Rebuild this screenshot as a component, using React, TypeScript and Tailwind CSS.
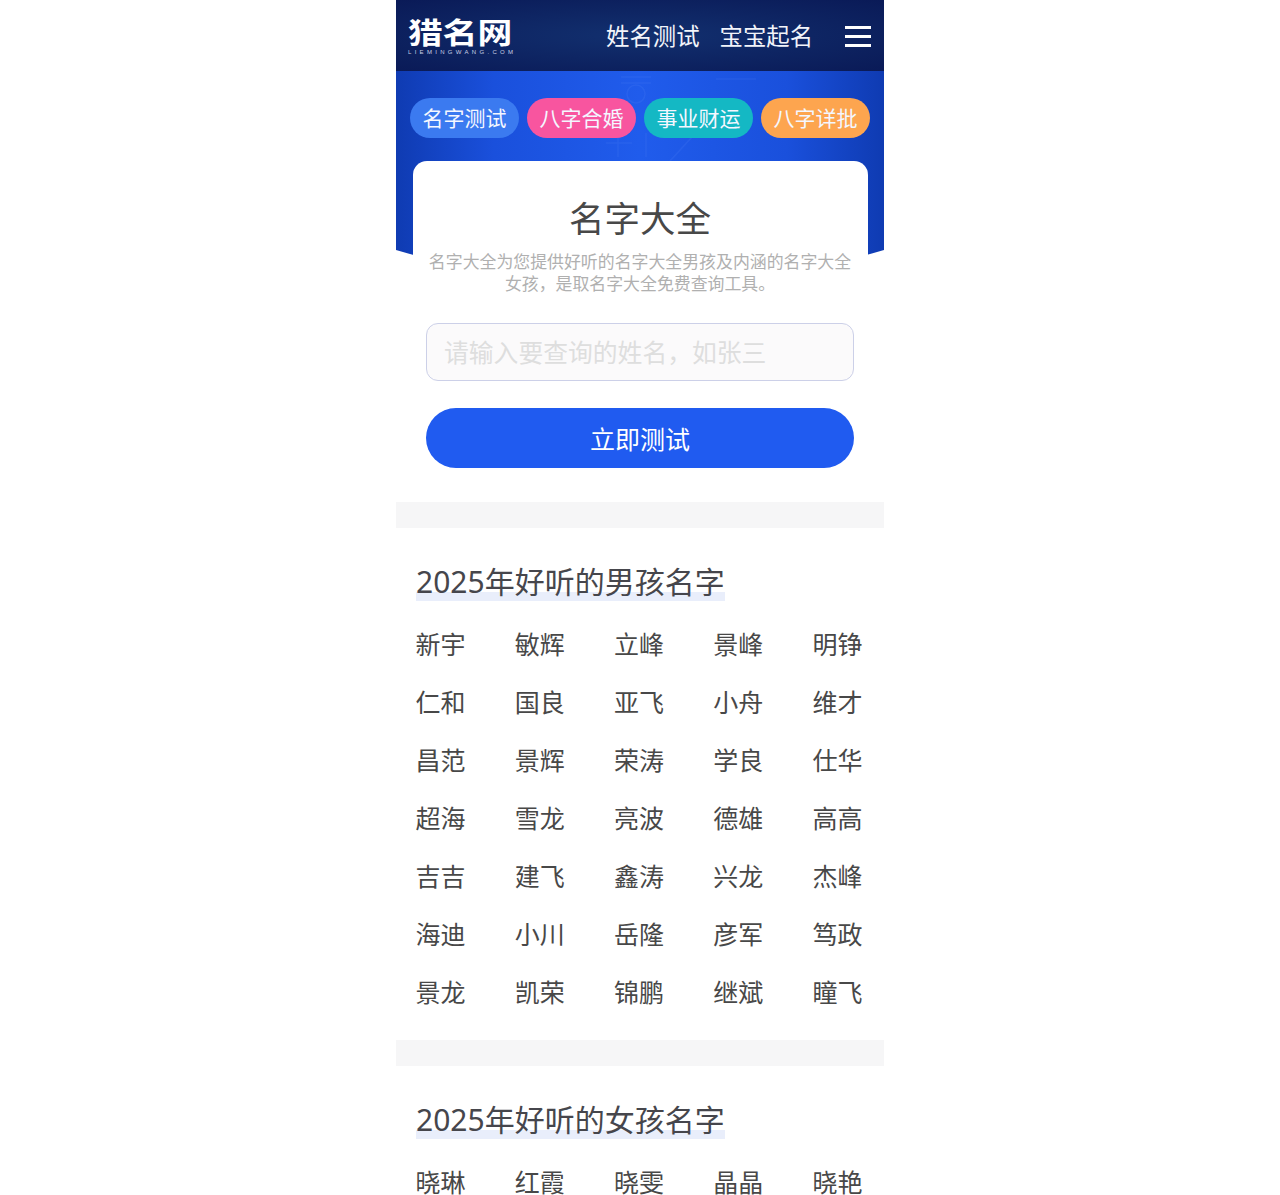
const boys = [
  ["新宇", "敏辉", "立峰", "景峰", "明铮"],
  ["仁和", "国良", "亚飞", "小舟", "维才"],
  ["昌范", "景辉", "荣涛", "学良", "仕华"],
  ["超海", "雪龙", "亮波", "德雄", "高高"],
  ["吉吉", "建飞", "鑫涛", "兴龙", "杰峰"],
  ["海迪", "小川", "岳隆", "彦军", "笃政"],
  ["景龙", "凯荣", "锦鹏", "继斌", "瞳飞"],
]

const girls = [["晓琳", "红霞", "晓雯", "晶晶", "晓艳"]]

function NameSection({ title, rows }: { title: string; rows: string[][] }) {
  return (
    <section className="px-5 pt-8 pb-[19px]">
      <h2 className="h-[41px] text-[30px] leading-[44px] font-normal text-[#46464c]">
        <span className="inline-block h-[41px] bg-[linear-gradient(to_top,#e9eefb_9px,transparent_9px)]">{title}</span>
      </h2>
      <div className="mt-[14px]">
        {rows.map((row, i) => (
          <div key={i} className="grid grid-cols-[99.25px_99.25px_99.25px_99.25px_50px]">
            {row.map((name) => (
              <span key={name} className="-ml-[0.5px] h-[58px] text-[25px] leading-[58px] text-[#484848]">
                {name}
              </span>
            ))}
          </div>
        ))}
      </div>
    </section>
  )
}

export default function App() {
  return (
    <div className="h-[1195px] overflow-hidden bg-white font-['Noto_Sans','Noto_Sans_CJK_SC',sans-serif]">
      <div className="mx-auto w-[488px]">
        <header className="flex h-[71px] items-center bg-[radial-gradient(ellipse_at_center,#12306f_0%,#0a1a57_100%)] pl-3 pr-[13px] text-white">
          <div className="w-[110px] pt-[3px]">
            <div className="origin-left scale-x-[1.2] text-[29px] leading-[28px] font-bold">猎名网</div>
            <div className="mt-[2px] text-[6px] leading-[6px] tracking-[3.3px] text-[#c8d0e4] font-['Liberation_Sans',sans-serif]">LIEMINGWANG.COM</div>
          </div>
          <nav className="ml-[88px] flex gap-[20px] text-[23.4px] leading-[34px] text-[#f2f4fa]">
            <span>姓名测试</span>
            <span>宝宝起名</span>
          </nav>
          <div className="ml-auto flex h-[22px] w-[26px] flex-col justify-between pt-px">
            <i className="block h-[3px] bg-white" />
            <i className="block h-[3px] bg-white" />
            <i className="block h-[3px] bg-white" />
          </div>
        </header>

        <div className="relative">
          <svg className="absolute left-0 top-0 h-[220px] w-[488px]" viewBox="0 0 488 220">
            <defs>
              <linearGradient id="hero" x1="0" y1="0" x2="1" y2="0">
                <stop offset="0" stopColor="#0f3bb2" />
                <stop offset="0.2" stopColor="#1a50dc" />
                <stop offset="0.5" stopColor="#205cec" />
                <stop offset="0.8" stopColor="#1a50dc" />
                <stop offset="1" stopColor="#0f3bb2" />
              </linearGradient>
            </defs>
            <path d="M0 0H488V179Q244 251 0 179Z" fill="url(#hero)" />
            <g fill="none" stroke="#5f8ff5" strokeOpacity="0.15" strokeWidth="1.5">
              <circle cx="240" cy="23" r="9" />
              <path d="M225 6h30M225 12h30M222 64v22M250 62v24M296 66l-22 24M320 8h40M210 72h26" />
            </g>
          </svg>

          <div className="relative flex gap-2 pl-[14px] pt-[27px] text-[21px] text-[#f4f7ff]">
            <span className="h-10 w-[109px] rounded-full bg-[#3b7af0] text-center leading-10">名字测试</span>
            <span className="h-10 w-[109px] rounded-full bg-[#f8559f] text-center leading-10">八字合婚</span>
            <span className="h-10 w-[109px] rounded-full bg-[#14b8c4] text-center leading-10">事业财运</span>
            <span className="h-10 w-[109px] rounded-full bg-[#fda54f] text-center leading-10">八字详批</span>
          </div>

          <div className="relative ml-[17px] mt-[23px] w-[455px] rounded-t-[14px] bg-white pr-px pt-8 text-center">
            <h1 className="text-[35.5px] leading-[50px] font-normal text-[#484848]">名字大全</h1>
            <p className="mt-2 text-[16.9px] leading-[22px] text-[#b0b0b0]">
              名字大全为您提供好听的名字大全男孩及内涵的名字大全
              <br />
              女孩，是取名字大全免费查询工具。
            </p>
          </div>
        </div>

        <div className="mt-[28px] px-[30px]">
          <div className="flex h-[58px] items-center rounded-[12px] border border-[#ccd0e8] bg-[#fbfafb] pl-[17px] pt-[2px] text-[24.8px] text-[#dedede]">
            请输入要查询的姓名，如张三
          </div>
          <button className="mt-[27px] h-[60px] w-full rounded-full bg-[#205bf0] pt-1 text-[25px] text-white">立即测试</button>
        </div>

        <div className="mt-[34px] h-[26px] bg-[#f6f6f7]" />
        <NameSection title="2025年好听的男孩名字" rows={boys} />
        <div className="h-[26px] bg-[#f6f6f7]" />
        <NameSection title="2025年好听的女孩名字" rows={girls} />
      </div>
    </div>
  )
}
